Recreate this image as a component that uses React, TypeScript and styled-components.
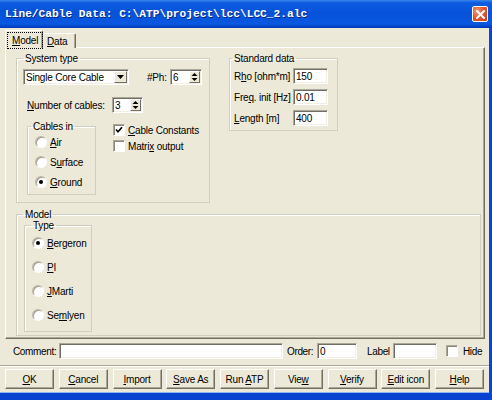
import React from "react";
import styled, { createGlobalStyle } from "styled-components";

const GlobalStyle = createGlobalStyle`
  html, body { margin: 0; padding: 0; background: #ECE9D8; }
  body {
    font-family: "Liberation Sans", Arial, sans-serif;
    font-size: 10px;
    letter-spacing: -0.2px;
    color: #000;
  }
  * { box-sizing: border-box; }
`;

const Window = styled.div`
  width: 492px;
  height: 400px;
  display: flex;
  flex-direction: column;
  background: #ECE9D8;
  overflow: hidden;
`;

const TitleBar = styled.div`
  height: 28px;
  flex: none;
  display: flex;
  align-items: center;
  justify-content: space-between;
  padding: 0 4px 0 5px;
  background: linear-gradient(
    180deg,
    #3a87ee 0%,
    #0d5bdf 10%,
    #0653da 45%,
    #0958df 85%,
    #0444c8 95%,
    #0337b0 100%
  );
`;

const Title = styled.span`
  font-family: "Liberation Mono", "DejaVu Sans Mono", monospace;
  font-weight: bold;
  font-size: 11.2px;
  letter-spacing: 0;
  color: #fff;
  white-space: pre;
  text-shadow: 1px 1px 0 #0a2a8a;
`;

const CloseButton = styled.div`
  width: 16px;
  height: 16px;
  border: 1px solid #fff;
  border-radius: 2px;
  background: radial-gradient(circle at 30% 30%, #f39a7c 0%, #e2582f 45%, #c8401d 100%);
  display: flex;
  align-items: center;
  justify-content: center;
`;

const Body = styled.div`
  flex: 1;
  display: flex;
  flex-direction: column;
  padding: 3px 0 3px 0;
  border-right: 3px solid #0a45d8;
  border-bottom: 7px solid #0842d0;
  box-shadow: inset 0 -1px 0 #8fb2f0;
`;

const TabStrip = styled.div`
  display: flex;
  align-items: flex-end;
  height: 17px;
  margin: 0 4px -1px 5px;
  position: relative;
  z-index: 1;
`;

const Tab = styled.div<{ $active?: boolean; $w: number }>`
  width: ${(p) => p.$w}px;
  height: ${(p) => (p.$active ? 18 : 15)}px;
  padding: ${(p) => (p.$active ? "1px 2px 0 2px" : "0 0 0 4px")};
  display: flex;
  align-items: center;
  background: #ECE9D8;
  border-top: 1px solid #fff;
  border-left: ${(p) => (p.$active ? "1px solid #fff" : "none")};
  border-right: 1px solid #716f64;
  border-radius: 2px 2px 0 0;
  box-shadow: inset -1px 0 0 #aca899;
`;

const FocusText = styled.span`
  flex: 1;
  outline: 1px dotted #000;
  padding: 1px 4px;
  line-height: 13px;
`;

const Panel = styled.div`
  margin: 0 4px 0 5px;
  padding: 5px 3px 2px 10px;
  border: 1px solid;
  border-color: #fff #716f64 #716f64 #fff;
  box-shadow: inset -1px -1px 0 #aca899;
  display: flex;
  flex-direction: column;
`;

const TopRow = styled.div`
  display: flex;
  align-items: flex-start;
  gap: 19px;
`;

const Group = styled.fieldset<{ $w: number }>`
  margin: 0;
  padding: 0;
  width: ${(p) => p.$w}px;
  min-width: 0;
  border: 1px solid #d0cebf;
  box-shadow: inset 1px 1px 0 #fff;
`;

const GroupLabel = styled.legend<{ $ml?: number }>`
  margin-left: ${(p) => p.$ml ?? 6}px;
  padding: 0 2px;
  font-size: 10px;
  line-height: 11px;
`;

const GroupBody = styled.div<{ $pad: string }>`
  padding: ${(p) => p.$pad};
  display: flex;
  flex-direction: column;
`;

const Row = styled.div<{ $mt?: number; $pl?: number; $h?: number }>`
  display: flex;
  align-items: ${(p) => (p.$h ? "center" : "flex-start")};
  margin-top: ${(p) => p.$mt ?? 0}px;
  padding-left: ${(p) => p.$pl ?? 0}px;
  ${(p) => (p.$h ? `height: ${p.$h}px;` : "")}
`;

const Label = styled.span<{ $w?: number; $ml?: number }>`
  display: inline-block;
  white-space: nowrap;
  ${(p) => (p.$w ? `width: ${p.$w}px;` : "")}
  margin-left: ${(p) => p.$ml ?? 0}px;
  flex: none;
`;

const Key = styled.span`
  text-decoration: underline;
`;

const Field = styled.div<{ $w: number; $ml?: number }>`
  width: ${(p) => p.$w}px;
  height: 16px;
  flex: none;
  margin-left: ${(p) => p.$ml ?? 0}px;
  background: #fff;
  border: 1px solid;
  border-color: #aca899 #fff #fff #aca899;
  box-shadow: inset 1px 1px 0 #716f64, inset -1px -1px 0 #f1efe2;
  padding: 0 0 0 2px;
  display: flex;
  align-items: center;
  justify-content: space-between;
  line-height: 13px;
  white-space: nowrap;
`;

const MiniButton = styled.div<{ $w: number; $h: number }>`
  width: ${(p) => p.$w}px;
  height: ${(p) => p.$h}px;
  margin-right: 1px;
  background: #ECE9D8;
  border: 1px solid;
  border-color: #fff #716f64 #716f64 #fff;
  display: flex;
  align-items: center;
  justify-content: center;
  flex: none;
`;

const Column = styled.div<{ $gap?: number; $mt?: number; $ml?: number }>`
  display: flex;
  flex-direction: column;
  gap: ${(p) => p.$gap ?? 0}px;
  margin-top: ${(p) => p.$mt ?? 0}px;
  margin-left: ${(p) => p.$ml ?? 0}px;
`;

const Option = styled.div<{ $h: number; $gap?: number }>`
  height: ${(p) => p.$h}px;
  display: flex;
  align-items: center;
  gap: ${(p) => p.$gap ?? 3}px;
  white-space: nowrap;
`;

const RadioDot = styled.span<{ $on?: boolean }>`
  width: 12px;
  height: 12px;
  flex: none;
  border-radius: 50%;
  position: relative;
  background: #fff;
  border: 1px solid;
  border-color: #b8b5a6 #fff #fff #b8b5a6;
  box-shadow: inset 1px 1px 0 #a09d8f;
  &::after {
    content: "";
    display: ${(p) => (p.$on ? "block" : "none")};
    position: absolute;
    left: 3px;
    top: 3px;
    width: 4px;
    height: 4px;
    border-radius: 50%;
    background: #000;
  }
`;

const CheckBox = styled.span`
  width: 12px;
  height: 12px;
  flex: none;
  background: #fff;
  border: 1px solid;
  border-color: #aca899 #fff #fff #aca899;
  box-shadow: inset 1px 1px 0 #8a8778;
  display: flex;
  align-items: center;
  justify-content: center;
`;

const ModelGroupWrap = styled.div`
  margin-top: 6px;
  display: flex;
`;

const BottomRow = styled.div`
  margin-top: 4px;
  height: 16px;
  padding-left: 13px;
  display: flex;
  align-items: center;
  letter-spacing: -0.35px;
`;

const Separator = styled.div`
  margin-top: 6px;
  height: 2px;
  border-top: 1px solid #aca899;
  border-bottom: 1px solid #fff;
`;

const ButtonBar = styled.div`
  margin: 2px 5px 0 5px;
  display: flex;
  justify-content: space-between;
`;

const Button = styled.div`
  width: 49px;
  height: 20px;
  display: flex;
  align-items: center;
  justify-content: center;
  background: #ECE9D8;
  border: 1px solid;
  border-color: #fff #716f64 #716f64 #fff;
  box-shadow: inset -1px -1px 0 #aca899;
  white-space: pre;
`;

const DownArrow = () => (
  <svg width="7" height="4" viewBox="0 0 7 4">
    <path d="M0 0H7L3.5 4Z" fill="#000" />
  </svg>
);

const SpinArrows = () => (
  <svg width="7" height="10" viewBox="0 0 7 10">
    <path d="M0.5 4L3.5 1L6.5 4Z" fill="#000" />
    <path d="M0.5 6L3.5 9L6.5 6Z" fill="#000" />
  </svg>
);

const Check = () => (
  <svg width="8" height="8" viewBox="0 0 8 8">
    <path d="M1 3.5L3 5.8L7 1.2" stroke="#000" strokeWidth="1.6" fill="none" />
  </svg>
);

const Spinner = ({ value, w, ml }: { value: string; w: number; ml?: number }) => (
  <Field $w={w} $ml={ml}>
    <span>{value}</span>
    <MiniButton $w={11} $h={12}>
      <SpinArrows />
    </MiniButton>
  </Field>
);

const Radio = ({ on, children, h }: { on?: boolean; children: React.ReactNode; h: number }) => (
  <Option $h={h}>
    <RadioDot $on={on} />
    <span>{children}</span>
  </Option>
);

const Checkbox = ({
  on,
  children,
  h,
  gap,
}: {
  on?: boolean;
  children: React.ReactNode;
  h: number;
  gap?: number;
}) => (
  <Option $h={h} $gap={gap}>
    <CheckBox>{on && <Check />}</CheckBox>
    <span>{children}</span>
  </Option>
);

const buttons: [string, string, string][] = [
  ["", "O", "K"],
  ["", "C", "ancel"],
  ["", "I", "mport"],
  ["", "S", "ave As"],
  ["Run ", "A", "TP"],
  ["Vie", "w", ""],
  ["", "V", "erify"],
  ["", "E", "dit icon"],
  ["", "H", "elp"],
];

export default function App() {
  return (
    <Window>
      <GlobalStyle />
      <TitleBar>
        <Title>{"Line/Cable Data: C:\\ATP\\project\\lcc\\LCC_2.alc"}</Title>
        <CloseButton>
          <svg width="9" height="9" viewBox="0 0 9 9">
            <path d="M1 1L8 8M8 1L1 8" stroke="#fff" strokeWidth="2" strokeLinecap="square" />
          </svg>
        </CloseButton>
      </TitleBar>
      <Body>
        <TabStrip>
          <Tab $active $w={38}>
            <FocusText>
              <Key>M</Key>odel
            </FocusText>
          </Tab>
          <Tab $w={33}>
            <span>
              <Key>D</Key>ata
            </span>
          </Tab>
        </TabStrip>
        <Panel>
          <TopRow>
            <Group $w={194}>
              <GroupLabel>System type</GroupLabel>
              <GroupBody $pad="5px 0 7px 6px">
                <Row $h={16}>
                  <Field $w={106}>
                    <span>Single Core Cable</span>
                    <MiniButton $w={13} $h={12}>
                      <DownArrow />
                    </MiniButton>
                  </Field>
                  <Label $w={23} $ml={18}>#Ph:</Label>
                  <Spinner value="6" w={32} />
                </Row>
                <Row $h={16} $mt={12} $pl={4}>
                  <Label $w={85}>
                    <Key>N</Key>umber of cables:
                  </Label>
                  <Spinner value="3" w={31} />
                </Row>
                <Row $mt={8} $pl={4}>
                  <Group $w={69}>
                    <GroupLabel $ml={3}>Cables in</GroupLabel>
                    <GroupBody $pad="0 0 2px 7px">
                      <Radio h={20}>
                        <Key>A</Key>ir
                      </Radio>
                      <Radio h={20}>
                        S<Key>u</Key>rface
                      </Radio>
                      <Radio h={20} on>
                        <Key>G</Key>round
                      </Radio>
                    </GroupBody>
                  </Group>
                  <Column $ml={17} $mt={1}>
                    <Checkbox h={16} on>
                      <Key>C</Key>able Constants
                    </Checkbox>
                    <Checkbox h={16}>
                      Matri<Key>x</Key> output
                    </Checkbox>
                  </Column>
                </Row>
              </GroupBody>
            </Group>
            <Group $w={109}>
              <GroupLabel $ml={2}>Standard data</GroupLabel>
              <GroupBody $pad="4px 8px 4px 4px">
                <Column $gap={5}>
                  <Row $h={16}>
                    <Label $w={59}>
                      R<Key>h</Key>o [ohm*m]
                    </Label>
                    <Field $w={35}>150</Field>
                  </Row>
                  <Row $h={16}>
                    <Label $w={59}>
                      Fre<Key>q</Key>. init [Hz]
                    </Label>
                    <Field $w={35}>0.01</Field>
                  </Row>
                  <Row $h={16}>
                    <Label $w={59}>
                      <Key>L</Key>ength [m]
                    </Label>
                    <Field $w={35}>400</Field>
                  </Row>
                </Column>
              </GroupBody>
            </Group>
          </TopRow>
          <ModelGroupWrap>
            <Group $w={465}>
              <GroupLabel>Model</GroupLabel>
              <GroupBody $pad="0 0 3px 7px">
                <Group $w={68}>
                  <GroupLabel>Type</GroupLabel>
                  <GroupBody $pad="0 0 4px 7px">
                    <Radio h={24} on>
                      <Key>B</Key>ergeron
                    </Radio>
                    <Radio h={24}>
                      <Key>P</Key>I
                    </Radio>
                    <Radio h={24}>
                      <Key>J</Key>Marti
                    </Radio>
                    <Radio h={24}>
                      Se<Key>m</Key>lyen
                    </Radio>
                  </GroupBody>
                </Group>
              </GroupBody>
            </Group>
          </ModelGroupWrap>
        </Panel>
        <BottomRow>
          <Label $w={46}>Comment:</Label>
          <Field $w={224} />
          <Label $w={30} $ml={4}>Order:</Label>
          <Field $w={40}>0</Field>
          <Label $w={26} $ml={10}>Label</Label>
          <Field $w={44} />
          <Column $ml={9}>
            <Checkbox h={16} gap={5}>
              Hide
            </Checkbox>
          </Column>
        </BottomRow>
        <Separator />
        <ButtonBar>
          {buttons.map(([a, k, b]) => (
            <Button key={a + k + b}>
              <span>
                {a}
                <Key>{k}</Key>
                {b}
              </span>
            </Button>
          ))}
        </ButtonBar>
      </Body>
    </Window>
  );
}
